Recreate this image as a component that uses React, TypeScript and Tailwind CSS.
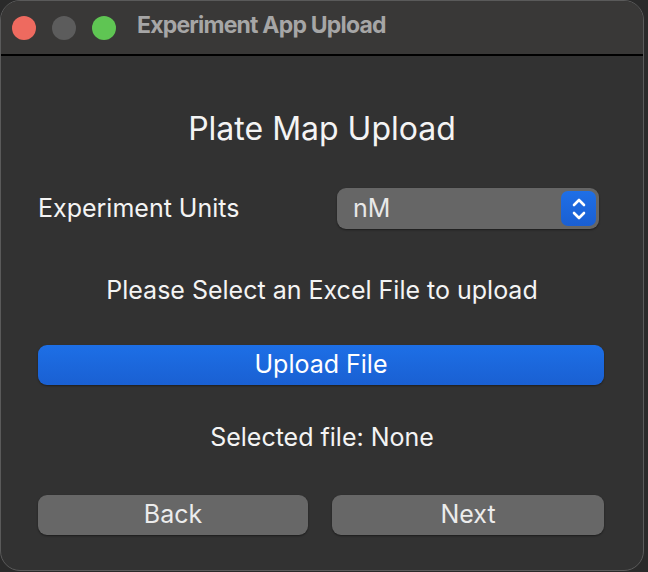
import { useState } from "react";

const font = { fontFamily: "Inter, 'Noto Sans', sans-serif" };

function Stepper() {
  return (
    <div className="flex h-[35px] w-[35px] items-center justify-center rounded-[7px] bg-gradient-to-b from-[#1f6fe6] to-[#1a5fd3]">
      <svg width="16" height="26" viewBox="0 0 16 26" fill="none" stroke="white" strokeWidth="2.6" strokeLinecap="round" strokeLinejoin="round">
        <path d="M3 9 L8 4 L13 9" />
        <path d="M3 17 L8 22 L13 17" />
      </svg>
    </div>
  );
}

export default function App() {
  const [file] = useState<string | null>(null);

  return (
    <div className="h-[572px] w-[648px] bg-[#2a2a2a]" style={font}>
      <div className="flex h-[571px] w-[644px] flex-col overflow-hidden rounded-[20px] border border-[#5a5a5a] bg-[#323232]">
        <div className="flex h-[55px] shrink-0 items-center border-b-2 border-black bg-[#393837] pl-[11px]">
          <div className="flex gap-[16px]">
            <span className="h-[24px] w-[24px] rounded-full bg-[#ee6a5f]" />
            <span className="h-[24px] w-[24px] rounded-full bg-[#5c5c5c]" />
            <span className="h-[24px] w-[24px] rounded-full bg-[#5fc553]" />
          </div>
          <span className="mb-[4px] ml-[21px] text-[23px] font-bold tracking-[-0.8px] text-[#a6a6a6]">Experiment App Upload</span>
        </div>

        <div className="flex flex-col px-[37px] text-[#f4f4f4]">
          <h1 className="mt-[54px] text-center text-[32px] leading-[38px]">Plate Map Upload</h1>

          <div className="mt-[40px] flex items-center">
            <span className="w-[299px] pb-[2px] text-[25px] leading-[30px]">Experiment Units</span>
            <div className="flex h-[41px] w-[262px] items-center justify-between rounded-[9px] bg-[#666666] pl-[16px] pr-[3px] shadow-[0_1px_2px_rgba(0,0,0,0.45)]">
              <span className="text-[25px] text-[#e8e8e8]">nM</span>
              <Stepper />
            </div>
          </div>

          <p className="mt-[46px] text-center text-[25px] leading-[30px]">Please Select an Excel File to upload</p>

          <button className="mt-[40px] h-[40px] w-[566px] rounded-[9px] bg-gradient-to-b from-[#1d6fe6] to-[#1a60d2] text-[25px] text-white shadow-[0_1px_2px_rgba(0,0,0,0.4)]">
            Upload File
          </button>

          <p className="mt-[37px] text-center text-[25px] leading-[30px]">Selected file: {file ?? "None"}</p>

          <div className="mt-[43px] flex gap-[24px]">
            <button className="h-[40px] w-[270px] rounded-[9px] bg-[#676767] text-[25px] text-[#ececec] shadow-[0_1px_2px_rgba(0,0,0,0.45)]">
              Back
            </button>
            <button className="h-[40px] w-[272px] rounded-[9px] bg-[#676767] text-[25px] text-[#ececec] shadow-[0_1px_2px_rgba(0,0,0,0.45)]">
              Next
            </button>
          </div>
        </div>
      </div>
    </div>
  );
}
